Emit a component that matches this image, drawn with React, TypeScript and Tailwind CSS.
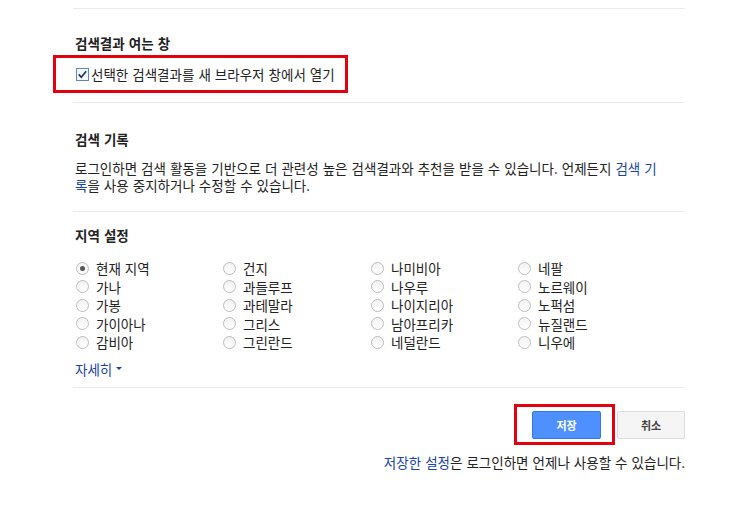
const regions: string[] = [
  "현재 지역", "가나", "가봉", "가이아나", "감비아",
  "건지", "과들루프", "과테말라", "그리스", "그린란드",
  "나미비아", "나우루", "나이지리아", "남아프리카", "네덜란드",
  "네팔", "노르웨이", "노퍽섬", "뉴질랜드", "니우에",
];

const Radio = ({ checked }: { checked?: boolean }) => (
  <span className="w-[13px] h-[13px] rounded-full border border-[#bdbdbd] bg-gradient-to-b from-[#f2f2f2] to-white flex items-center justify-center shrink-0">
    {checked && <span className="w-[5px] h-[5px] rounded-full bg-[#555]" />}
  </span>
);

const Divider = () => <div className="h-px bg-[#ebebeb]" />;

export default function App() {
  return (
    <div
      className="w-[750px] h-[515px] bg-white text-[13.5px] leading-[18px] text-[#222] [word-spacing:1px]"
      style={{ fontFamily: '"Noto Sans CJK KR", "Noto Sans", sans-serif' }}
    >
      <div className="ml-[73px] w-[612px] pt-2">
        <Divider />

        <div className="pl-[2px]">
          <h3 className="mt-[25px] font-bold">검색결과 여는 창</h3>
          <div className="relative mt-[13px] flex items-center gap-[2px] pl-px">
            <svg width="13" height="13" viewBox="0 0 13 13" className="shrink-0">
              <rect x="0.5" y="0.5" width="12" height="12" fill="#f3f7fc" stroke="#5b87c6" />
              <path d="M2.8 6.4 L5.3 9.2 L10.2 3.2" stroke="#1b3560" strokeWidth="1.7" fill="none" />
            </svg>
            <span>선택한 검색결과를 새 브라우저 창에서 열기</span>
            <div className="absolute left-[-22px] top-[-10px] w-[295px] h-[38px] border-[3px] border-[#e3000f]" />
          </div>
        </div>

        <div className="mt-[19px]">
          <Divider />
        </div>

        <div className="pl-[2px]">
          <h3 className="mt-[27px] font-bold">검색 기록</h3>
          <div className="mt-[12px] leading-[17px] whitespace-nowrap">
            <div>
              로그인하면 검색 활동을 기반으로 더 관련성 높은 검색결과와 추천을 받을 수 있습니다. 언제든지{" "}
              <a className="text-[#1a44a8]">검색 기</a>
            </div>
            <div>
              <a className="text-[#1a44a8]">록</a>을 사용 중지하거나 수정할 수 있습니다.
            </div>
          </div>
        </div>

        <div className="mt-[17px]">
          <Divider />
        </div>

        <div className="pl-[2px]">
          <h3 className="mt-[14px] font-bold">지역 설정</h3>
          <div className="mt-[15px] grid grid-flow-col grid-rows-[repeat(5,18.5px)] grid-cols-[147px_148px_147px_147px]">
            {regions.map((r, i) => (
              <label key={r} className="flex items-center gap-[7px] pl-px">
                <Radio checked={i === 0} />
                <span>{r}</span>
              </label>
            ))}
          </div>
          <div className="mt-[8px] flex items-center gap-[4px] text-[#1a44a8]">
            <span>자세히</span>
            <span className="w-0 h-0 border-l-[3px] border-r-[3px] border-t-[3px] border-l-transparent border-r-transparent border-t-[#1a44a8]" />
          </div>
        </div>

        <div className="mt-[9px]">
          <Divider />
        </div>

        <div className="mt-[23px] flex justify-end gap-[16px]">
          <div className="relative">
            <button className="w-[69px] h-[28px] rounded-[2px] border border-[#3079ed] bg-[#4d90fe] text-white text-[11px] font-bold">
              저장
            </button>
            <div className="absolute left-[-18px] top-[-7px] w-[101px] h-[41px] border-[3px] border-[#e3000f]" />
          </div>
          <button className="w-[68px] h-[28px] rounded-[2px] border border-[#dcdcdc] bg-[#f5f5f5] text-[#444] text-[11px] font-bold">
            취소
          </button>
        </div>

        <p className="mt-[14px] text-right">
          <a className="text-[#1a44a8]">저장한 설정</a>은 로그인하면 언제나 사용할 수 있습니다.
        </p>
      </div>
    </div>
  );
}
